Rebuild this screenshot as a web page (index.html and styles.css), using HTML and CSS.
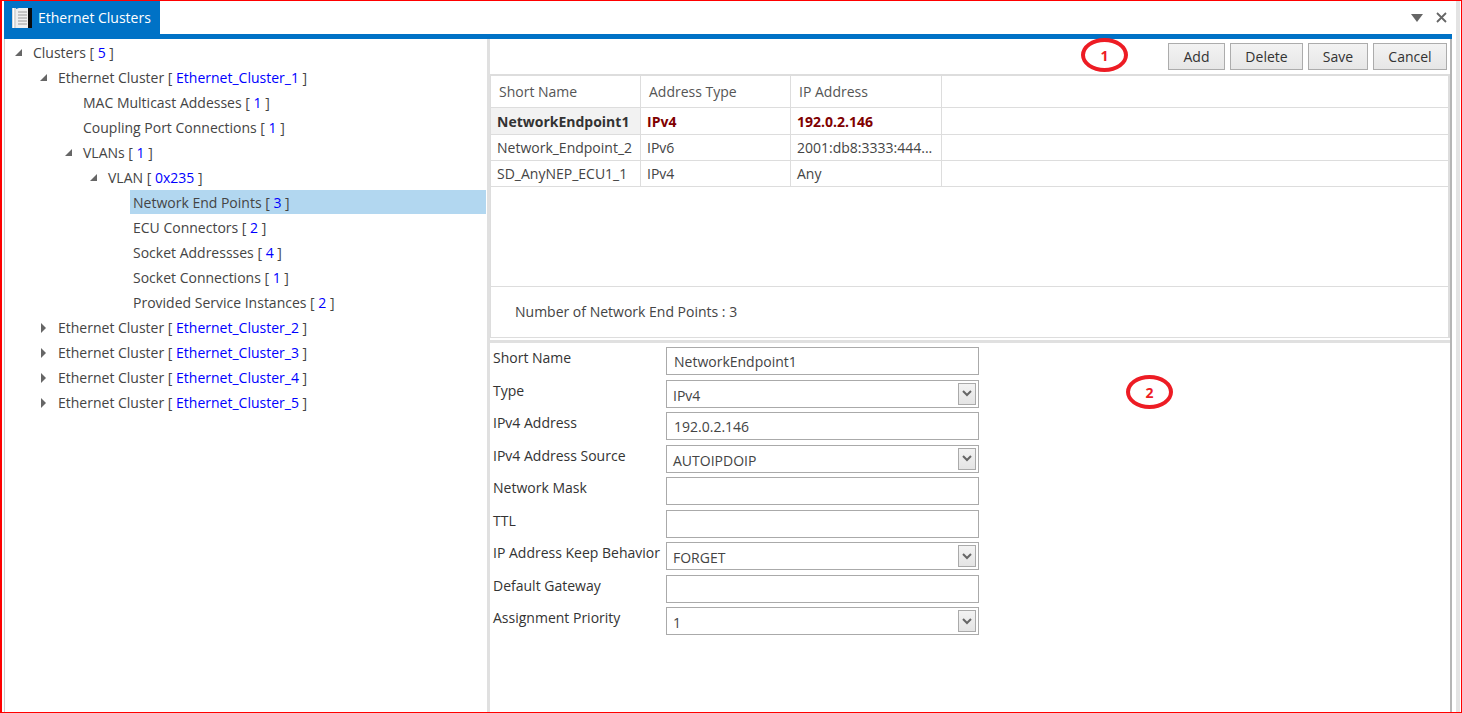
FILE: index.html
```html
<!DOCTYPE html>
<html lang="en">

<head>
    <meta charset="UTF-8">
    <title>Ethernet Clusters</title>
    <link rel="stylesheet" href="styles.css">
</head>

<body>
    <div class="window">
        <div class="pane">
            <div class="titlebar">
                <div class="tab">
                    <svg class="tab-icon" width="20" height="20" viewBox="0 0 20 20">
                        <rect x="0" y="0" width="4" height="20" fill="#d8d8d8"/>
                        <rect x="1" y="0" width="1" height="20" fill="#fff"/>
                        <path d="M4 1L7 0h10v20H4z" fill="#efefef"/>
                        <rect x="16" y="0" width="4" height="20" fill="#0a0a0a"/>
                        <path d="M6 4h9M6 7h9M6 10h9M6 13h9M6 16h9" stroke="#9a9a9a" fill="none"/>
                    </svg>
                    <span>Ethernet Clusters</span>
                </div>
                <div class="win-controls">
                    <svg width="12" height="8" viewBox="0 0 12 8"><path d="M0 0h12L6 8z" fill="#666"/></svg>
                    <svg width="11" height="11" viewBox="0 0 11 11"><path d="M1 1l9 9M10 1l-9 9" stroke="#666" stroke-width="1.8" fill="none"/></svg>
                </div>
            </div>
            <div class="accent"></div>

            <div class="main">
                <div class="tree">
                    <div class="node lvl-0"><i class="open"></i>Clusters [ <b>5</b> ]</div>
                    <div class="node lvl-1"><i class="open"></i>Ethernet Cluster [ <b>Ethernet_Cluster_1</b> ]</div>
                    <div class="node lvl-2">MAC Multicast Addesses [ <b>1</b> ]</div>
                    <div class="node lvl-2">Coupling Port Connections [ <b>1</b> ]</div>
                    <div class="node lvl-2"><i class="open"></i>VLANs [ <b>1</b> ]</div>
                    <div class="node lvl-3"><i class="open"></i>VLAN [ <b>0x235</b> ]</div>
                    <div class="node active">Network End Points [ <b>3</b> ]</div>
                    <div class="node lvl-4">ECU Connectors [ <b>2</b> ]</div>
                    <div class="node lvl-4">Socket Addressses [ <b>4</b> ]</div>
                    <div class="node lvl-4">Socket Connections [ <b>1</b> ]</div>
                    <div class="node lvl-4">Provided Service Instances [ <b>2</b> ]</div>
                    <div class="node lvl-1"><i class="closed"></i>Ethernet Cluster [ <b>Ethernet_Cluster_2</b> ]</div>
                    <div class="node lvl-1"><i class="closed"></i>Ethernet Cluster [ <b>Ethernet_Cluster_3</b> ]</div>
                    <div class="node lvl-1"><i class="closed"></i>Ethernet Cluster [ <b>Ethernet_Cluster_4</b> ]</div>
                    <div class="node lvl-1"><i class="closed"></i>Ethernet Cluster [ <b>Ethernet_Cluster_5</b> ]</div>
                </div>

                <div class="detail">
                    <div class="toolbar">
                        <button type="button" class="btn btn-add">Add</button>
                        <button type="button" class="btn btn-delete">Delete</button>
                        <button type="button" class="btn btn-save">Save</button>
                        <button type="button" class="btn btn-cancel">Cancel</button>
                    </div>

                    <div class="grid-box">
                        <div class="row head">
                            <div class="cell">Short Name</div>
                            <div class="cell">Address Type</div>
                            <div class="cell">IP Address</div>
                            <div class="cell"></div>
                        </div>
                        <div class="row current">
                            <div class="cell">NetworkEndpoint1</div>
                            <div class="cell">IPv4</div>
                            <div class="cell">192.0.2.146</div>
                            <div class="cell"></div>
                        </div>
                        <div class="row">
                            <div class="cell">Network_Endpoint_2</div>
                            <div class="cell">IPv6</div>
                            <div class="cell">2001:db8:3333:444...</div>
                            <div class="cell"></div>
                        </div>
                        <div class="row">
                            <div class="cell">SD_AnyNEP_ECU1_1</div>
                            <div class="cell">IPv4</div>
                            <div class="cell">Any</div>
                            <div class="cell"></div>
                        </div>
                        <div class="grid-space"></div>
                        <div class="summary">Number of Network End Points : 3</div>
                    </div>

                    <div class="form">
                        <label>Short Name</label>
                        <div class="field">NetworkEndpoint1</div>
                        <label>Type</label>
                        <div class="field combo">IPv4<span class="drop"><svg width="10" height="7" viewBox="0 0 10 7"><path d="M1 1l4 4 4-4" stroke="#666" stroke-width="2" fill="none"/></svg></span></div>
                        <label>IPv4 Address</label>
                        <div class="field">192.0.2.146</div>
                        <label>IPv4 Address Source</label>
                        <div class="field combo">AUTOIPDOIP<span class="drop"><svg width="10" height="7" viewBox="0 0 10 7"><path d="M1 1l4 4 4-4" stroke="#666" stroke-width="2" fill="none"/></svg></span></div>
                        <label>Network Mask</label>
                        <div class="field"></div>
                        <label>TTL</label>
                        <div class="field"></div>
                        <label>IP Address Keep Behavior</label>
                        <div class="field combo">FORGET<span class="drop"><svg width="10" height="7" viewBox="0 0 10 7"><path d="M1 1l4 4 4-4" stroke="#666" stroke-width="2" fill="none"/></svg></span></div>
                        <label>Default Gateway</label>
                        <div class="field"></div>
                        <label>Assignment Priority</label>
                        <div class="field combo">1<span class="drop"><svg width="10" height="7" viewBox="0 0 10 7"><path d="M1 1l4 4 4-4" stroke="#666" stroke-width="2" fill="none"/></svg></span></div>
                    </div>
                </div>
            </div>
        </div>

        <div class="edge"></div>

        <div class="callout callout-1">1</div>
        <div class="callout callout-2">2</div>
    </div>
</body>

</html>
```

FILE: styles.css
```css
* {
    box-sizing: border-box;
}

html,
body {
    margin: 0;
    height: 100%;
}

body {
    font-family: "Open Sans", "Noto Sans", sans-serif;
    font-size: 14px;
    color: #444;
    background: #fff;
}

.window {
    position: relative;
    display: flex;
    width: 1462px;
    height: 713px;
    padding: 0 1px 0 2px;
    border: 1px solid #f00;
    border-left-width: 2px;
    overflow: hidden;
}

.pane {
    display: flex;
    flex-direction: column;
    flex: 1;
    min-width: 0;
}

.edge {
    width: 4px;
    margin-left: 4px;
    flex: none;
    background: #e3e3e3;
}

.titlebar {
    display: flex;
    justify-content: space-between;
    height: 33px;
    flex: none;
}

.tab {
    display: flex;
    align-items: center;
    gap: 6px;
    width: 156px;
    padding-left: 8px;
    background: #0072c6;
    color: #fff;
}

.win-controls {
    display: flex;
    align-items: center;
    gap: 13px;
    margin-right: 5px;
}

.accent {
    height: 5px;
    flex: none;
    background: #0072c6;
}

.main {
    display: flex;
    flex: 1;
    min-height: 0;
    border-left: 1px solid #ccc;
}

/* tree on the left */
.tree {
    width: 482px;
    padding: 1px 1px 0 0;
    flex: none;
}

.node {
    position: relative;
    height: 25px;
    line-height: 25px;
    white-space: nowrap;
}

.node b {
    font-weight: 400;
    color: #00f;
}

.lvl-0 { padding-left: 28px; }
.lvl-1 { padding-left: 53px; }
.lvl-2 { padding-left: 78px; }
.lvl-3 { padding-left: 103px; }
.lvl-4 { padding-left: 128px; }

.active {
    height: 24px;
    margin: 0 0 1px 125px;
    padding-left: 3px;
    background: #b2d7f0;
}

.node i {
    position: absolute;
    margin-left: -18px;
}

.node .open {
    top: 9px;
    width: 0;
    height: 0;
    border-left: 7px solid transparent;
    border-bottom: 7px solid #666;
}

.node .closed {
    top: 8px;
    margin-left: -17px;
    width: 0;
    height: 0;
    border-top: 5px solid transparent;
    border-bottom: 5px solid transparent;
    border-left: 5px solid #666;
}

/* right side */
.detail {
    display: flex;
    flex-direction: column;
    flex: 1;
    min-width: 0;
    border-left: 3px solid #e0e0e0;
    border-right: 2px solid #b5b5b5;
}

.toolbar {
    display: flex;
    justify-content: flex-end;
    gap: 5px;
    height: 35px;
    padding: 4px 3px 0 0;
    flex: none;
}

.btn {
    height: 27px;
    padding: 0;
    font: inherit;
    color: #333;
    background: linear-gradient(#f3f3f3, #e6e6e6);
    border: 1px solid #acacac;
}

.btn-add { width: 57px; }
.btn-delete { width: 73px; }
.btn-save { width: 60px; }
.btn-cancel { width: 74px; }

.grid-box {
    display: flex;
    flex-direction: column;
    height: 264px;
    margin-bottom: 2px;
    flex: none;
    border: 1px solid #ddd;
    border-top-width: 2px;
    border-right-width: 2px;
}

.row {
    display: grid;
    grid-template-columns: 150px 150px 151px 1fr;
    height: 26px;
    line-height: 25px;
    border-bottom: 1px solid #ddd;
    flex: none;
}

.row .cell {
    padding-left: 6px;
    white-space: nowrap;
    overflow: hidden;
    border-right: 1px solid #ddd;
}

.row .cell:last-child {
    border-right: 0;
}

.head {
    height: 32px;
    line-height: 32px;
    color: #555;
}

.head .cell {
    padding-left: 8px;
}

.current {
    height: 27px;
    line-height: 27px;
    font-weight: 700;
    color: #800000;
}

.current .cell:first-child {
    color: #333;
    background: #f2f2f2;
}

.grid-space {
    flex: 1;
    border-bottom: 1px solid #ddd;
}

.summary {
    height: 50px;
    padding-left: 24px;
    line-height: 50px;
    flex: none;
}

.form {
    display: grid;
    grid-template-columns: 173px 313px;
    grid-auto-rows: 32.5px;
    align-items: start;
    padding: 4px 0 0 3px;
    border-top: 3px solid #e0e0e0;
    color: #333;
}

.form label {
    line-height: 22px;
    white-space: nowrap;
}

.field {
    position: relative;
    height: 28px;
    padding-left: 7px;
    line-height: 27px;
    color: #444;
    border: 1px solid #aaa;
}

.combo {
    padding-left: 6px;
    line-height: 29px;
}

.drop {
    position: absolute;
    top: 2px;
    right: 2px;
    bottom: 2px;
    display: flex;
    align-items: center;
    justify-content: center;
    width: 18px;
    background: linear-gradient(#f3f3f3, #e4e4e4);
    border: 1px solid #aaa;
}

/* hand drawn annotations on top of the screenshot */
.callout {
    position: absolute;
    width: 47px;
    height: 34px;
    font-size: 14px;
    font-weight: 700;
    line-height: 27px;
    text-align: center;
    color: #ed1c24;
    border: 4px solid #ed1c24;
    border-radius: 50%;
}

.callout-1 {
    top: 37px;
    left: 1079px;
}

.callout-2 {
    top: 374px;
    left: 1124px;
}
```
